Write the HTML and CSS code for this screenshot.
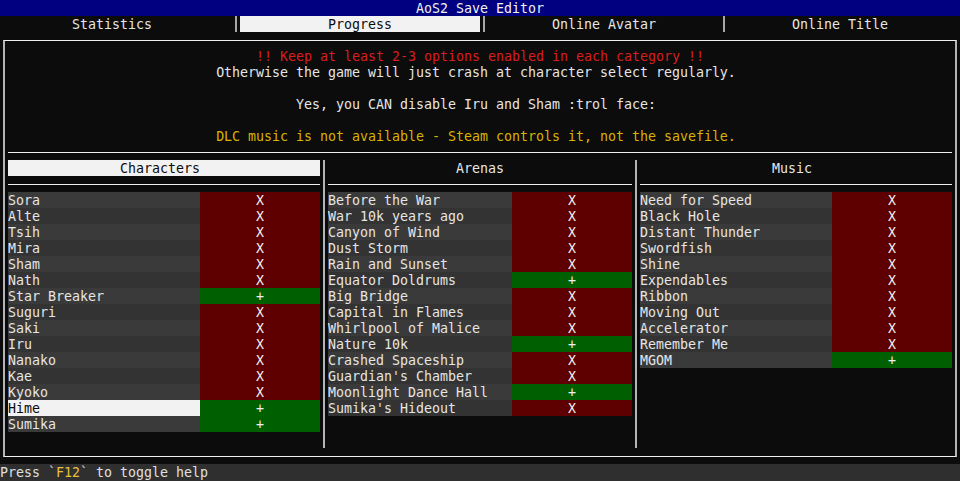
FILE: index.html
```html
<!DOCTYPE html>
<html lang="en">
<head>
<meta charset="utf-8">
<title>AoS2 Save Editor</title>
<link rel="stylesheet" href="styles.css">
</head>
<body>
<div class="screen">
  <div class="titlebar">AoS2 Save Editor</div>
  <div class="tabs">
    <div class="tab tab-first">Statistics</div>
    <div class="tab-sep"><span></span></div>
    <div class="tab tab-sel">Progress</div>
    <div class="tab-sep"><span></span></div>
    <div class="tab">Online Avatar</div>
    <div class="tab-sep"><span></span></div>
    <div class="tab tab-last">Online Title</div>
  </div>
  <div class="frame">
    <div class="notes">
      <div class="note red">!! Keep at least 2-3 options enabled in each category !!</div>
      <div class="note odd">Otherwise the game will just crash at character select regularly.</div>
      <div class="note"></div>
      <div class="note odd">Yes, you CAN disable Iru and Sham :trol face:</div>
      <div class="note"></div>
      <div class="note odd yellow">DLC music is not available - Steam controls it, not the savefile.</div>
    </div>
    <div class="lists">
      <div class="panel">
        <div class="panel-head sel odd">Characters</div>
        <div class="panel-rule"></div>
        <div class="item"><span class="name">Sora</span><span class="st off">X</span></div>
        <div class="item"><span class="name">Alte</span><span class="st off">X</span></div>
        <div class="item"><span class="name">Tsih</span><span class="st off">X</span></div>
        <div class="item"><span class="name">Mira</span><span class="st off">X</span></div>
        <div class="item"><span class="name">Sham</span><span class="st off">X</span></div>
        <div class="item"><span class="name">Nath</span><span class="st off">X</span></div>
        <div class="item"><span class="name">Star Breaker</span><span class="st on">+</span></div>
        <div class="item"><span class="name">Suguri</span><span class="st off">X</span></div>
        <div class="item"><span class="name">Saki</span><span class="st off">X</span></div>
        <div class="item"><span class="name">Iru</span><span class="st off">X</span></div>
        <div class="item"><span class="name">Nanako</span><span class="st off">X</span></div>
        <div class="item"><span class="name">Kae</span><span class="st off">X</span></div>
        <div class="item"><span class="name">Kyoko</span><span class="st off">X</span></div>
        <div class="item cur"><span class="name">Hime</span><span class="st on">+</span></div>
        <div class="item"><span class="name">Sumika</span><span class="st on">+</span></div>
      </div>
      <div class="divider"></div>
      <div class="panel">
        <div class="panel-head">Arenas</div>
        <div class="panel-rule"></div>
        <div class="item"><span class="name">Before the War</span><span class="st off">X</span></div>
        <div class="item"><span class="name">War 10k years ago</span><span class="st off">X</span></div>
        <div class="item"><span class="name">Canyon of Wind</span><span class="st off">X</span></div>
        <div class="item"><span class="name">Dust Storm</span><span class="st off">X</span></div>
        <div class="item"><span class="name">Rain and Sunset</span><span class="st off">X</span></div>
        <div class="item"><span class="name">Equator Doldrums</span><span class="st on">+</span></div>
        <div class="item"><span class="name">Big Bridge</span><span class="st off">X</span></div>
        <div class="item"><span class="name">Capital in Flames</span><span class="st off">X</span></div>
        <div class="item"><span class="name">Whirlpool of Malice</span><span class="st off">X</span></div>
        <div class="item"><span class="name">Nature 10k</span><span class="st on">+</span></div>
        <div class="item"><span class="name">Crashed Spaceship</span><span class="st off">X</span></div>
        <div class="item"><span class="name">Guardian's Chamber</span><span class="st off">X</span></div>
        <div class="item"><span class="name">Moonlight Dance Hall</span><span class="st on">+</span></div>
        <div class="item"><span class="name">Sumika's Hideout</span><span class="st off">X</span></div>
      </div>
      <div class="divider"></div>
      <div class="panel">
        <div class="panel-head odd">Music</div>
        <div class="panel-rule"></div>
        <div class="item"><span class="name">Need for Speed</span><span class="st off">X</span></div>
        <div class="item"><span class="name">Black Hole</span><span class="st off">X</span></div>
        <div class="item"><span class="name">Distant Thunder</span><span class="st off">X</span></div>
        <div class="item"><span class="name">Swordfish</span><span class="st off">X</span></div>
        <div class="item"><span class="name">Shine</span><span class="st off">X</span></div>
        <div class="item"><span class="name">Expendables</span><span class="st off">X</span></div>
        <div class="item"><span class="name">Ribbon</span><span class="st off">X</span></div>
        <div class="item"><span class="name">Moving Out</span><span class="st off">X</span></div>
        <div class="item"><span class="name">Accelerator</span><span class="st off">X</span></div>
        <div class="item"><span class="name">Remember Me</span><span class="st off">X</span></div>
        <div class="item"><span class="name">MGOM</span><span class="st on">+</span></div>
      </div>
    </div>
  </div>
  <div class="statusbar">Press `<span class="key">F12</span>` to toggle help</div>
</div>
</body>
</html>
```
FILE: styles.css
```css
html, body {
  margin: 0;
  padding: 0;
  background: #0c0c0c;
}

body {
  font-family: "DejaVu Sans Mono", "Liberation Mono", monospace;
  font-size: 13.29px;
  line-height: 18px;
  color: #dcdcdc;
}

.screen {
  width: 960px;
  height: 481px;
  overflow: hidden;
}

.titlebar,
.tab,
.note,
.panel-head,
.name,
.st,
.statusbar {
  white-space: pre;
}

.titlebar {
  height: 16px;
  background: #000080;
  color: #f2f2f2;
  text-align: center;
}

.tabs {
  display: flex;
  height: 16px;
}

.tab {
  width: 232px;
  height: 16px;
  text-align: center;
  color: #e6e6e6;
}

.tab-first {
  padding-right: 8px;
  width: 224px;
}

.tab-sel {
  width: 240px;
  background: #f2f2f2;
  color: #0c0c0c;
}

.tab-last {
  width: 224px;
}

.tab-sep {
  width: 8px;
  height: 16px;
  display: flex;
  justify-content: center;
}

.tab-sep span {
  width: 2px;
  background: #a8a8a8;
}

.frame {
  box-sizing: border-box;
  margin: 8px 0 0 3px;
  width: 954px;
  height: 417px;
  border-top: 1px solid #f0f0f0;
  border-bottom: 1px solid #f0f0f0;
  border-left: 2px solid #b4b4b4;
  border-right: 2px solid #b4b4b4;
  padding: 7px 3px 8px 3px;
}

.notes {
  height: 96px;
}

.note {
  height: 16px;
  text-align: center;
  color: #e6e6e6;
}

.note.odd {
  padding-right: 8px;
}

.red {
  color: #d81e1e;
}

.note.yellow {
  color: #d9b300;
}

.lists {
  margin-top: 8px;
  border-top: 1px solid #f0f0f0;
  padding-top: 7px;
  height: 288px;
  display: grid;
  grid-template-columns: 312px 8px 304px 8px 312px;
}

.divider {
  width: 2px;
  margin: 0 3px;
  background: #b4b4b4;
}

.panel {
  display: flex;
  flex-direction: column;
}

.panel-head {
  height: 16px;
  flex: none;
  text-align: center;
  color: #e6e6e6;
}

.panel-head.odd {
  padding-right: 8px;
}

.panel-head.sel {
  background: #f2f2f2;
  color: #0c0c0c;
}

.panel-rule {
  height: 1px;
  flex: none;
  margin: 8px 0 7px;
  background: #f0f0f0;
}

.item {
  display: grid;
  grid-template-columns: 1fr 120px;
  grid-template-rows: 16px;
  height: 16px;
  flex: none;
}

.item .name {
  background: #3a3a3a;
  color: #e6e6e6;
}

.item:nth-of-type(even) .name {
  background: #333333;
}

.item.cur .name {
  background: #f2f2f2;
  color: #0c0c0c;
}

.st {
  text-align: center;
  color: #f0f0f0;
}

.st.off {
  background: #5f0000;
}

.st.on {
  background: #005f00;
}

.statusbar {
  margin-top: 7px;
  height: 17px;
  background: #2f2f2f;
  color: #e0e0e0;
}

.key {
  color: #e8c13a;
}
```
